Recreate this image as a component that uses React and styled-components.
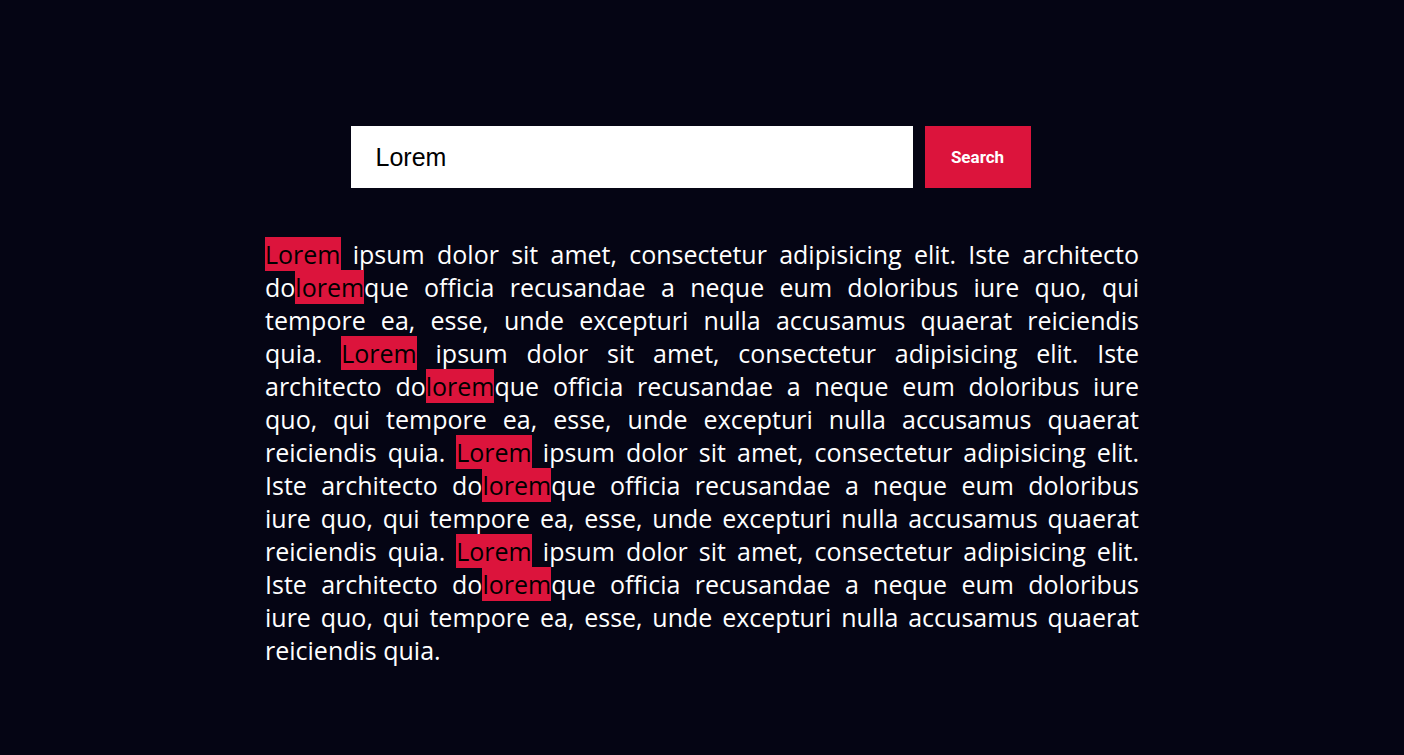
import React from "react";
import styled, { createGlobalStyle } from "styled-components";

const GlobalStyle = createGlobalStyle`
  html, body {
    margin: 0;
    padding: 0;
    background: #050514;
  }
`;

const Page = styled.main`
  min-height: 755px;
  display: flex;
  flex-direction: column;
  align-items: center;
  padding-top: 126px;
  box-sizing: border-box;
`;

const SearchForm = styled.form`
  width: 702px;
  display: flex;
  gap: 12px;
  margin-left: -1px;
`;

const SearchInput = styled.input`
  width: 562px;
  height: 62px;
  box-sizing: border-box;
  border: none;
  outline: none;
  padding: 0 25px;
  font-family: "Liberation Sans", Arial, sans-serif;
  font-size: 25px;
  color: #000;
  background: #fff;
`;

const SearchButton = styled.button`
  width: 106px;
  height: 62px;
  border: none;
  background: #dc143c;
  color: #fff;
  font-family: Roboto, "Liberation Sans", sans-serif;
  font-weight: 700;
  font-size: 17px;
  cursor: pointer;
`;

const Text = styled.p`
  width: 874px;
  margin: 50px 0 0;
  color: #fff;
  font-family: "Open Sans", "Noto Sans", sans-serif;
  font-size: 25px;
  line-height: 33px;
`;

const Line = styled.span`
  display: block;
  white-space: nowrap;
  text-align: justify;
  text-align-last: ${(p) => (p.$last ? "left" : "justify")};
  word-spacing: ${(p) => (p.$last ? "0" : "-1px")};
`;

const Mark = styled.mark`
  background: #dc143c;
  color: #000;
  padding: 0;
`;

const lines = [
  ["", "Lorem", " ipsum dolor sit amet, consectetur adipisicing elit. Iste architecto"],
  ["do", "lorem", "que officia recusandae a neque eum doloribus iure quo, qui"],
  ["tempore ea, esse, unde excepturi nulla accusamus quaerat reiciendis"],
  ["quia. ", "Lorem", " ipsum dolor sit amet, consectetur adipisicing elit. Iste"],
  ["architecto do", "lorem", "que officia recusandae a neque eum doloribus iure"],
  ["quo, qui tempore ea, esse, unde excepturi nulla accusamus quaerat"],
  ["reiciendis quia. ", "Lorem", " ipsum dolor sit amet, consectetur adipisicing elit."],
  ["Iste architecto do", "lorem", "que officia recusandae a neque eum doloribus"],
  ["iure quo, qui tempore ea, esse, unde excepturi nulla accusamus quaerat"],
  ["reiciendis quia. ", "Lorem", " ipsum dolor sit amet, consectetur adipisicing elit."],
  ["Iste architecto do", "lorem", "que officia recusandae a neque eum doloribus"],
  ["iure quo, qui tempore ea, esse, unde excepturi nulla accusamus quaerat"],
  ["reiciendis quia."],
];

export default function App() {
  return (
    <>
      <GlobalStyle />
      <Page>
        <SearchForm onSubmit={(e) => e.preventDefault()}>
          <SearchInput type="text" defaultValue="Lorem" />
          <SearchButton type="submit">Search</SearchButton>
        </SearchForm>
        <Text>
          {lines.map((parts, i) => (
            <Line key={i} $last={i === lines.length - 1}>
              {parts.map((part, j) =>
                j === 1 ? <Mark key={j}>{part}</Mark> : <React.Fragment key={j}>{part}</React.Fragment>
              )}
            </Line>
          ))}
        </Text>
      </Page>
    </>
  );
}
